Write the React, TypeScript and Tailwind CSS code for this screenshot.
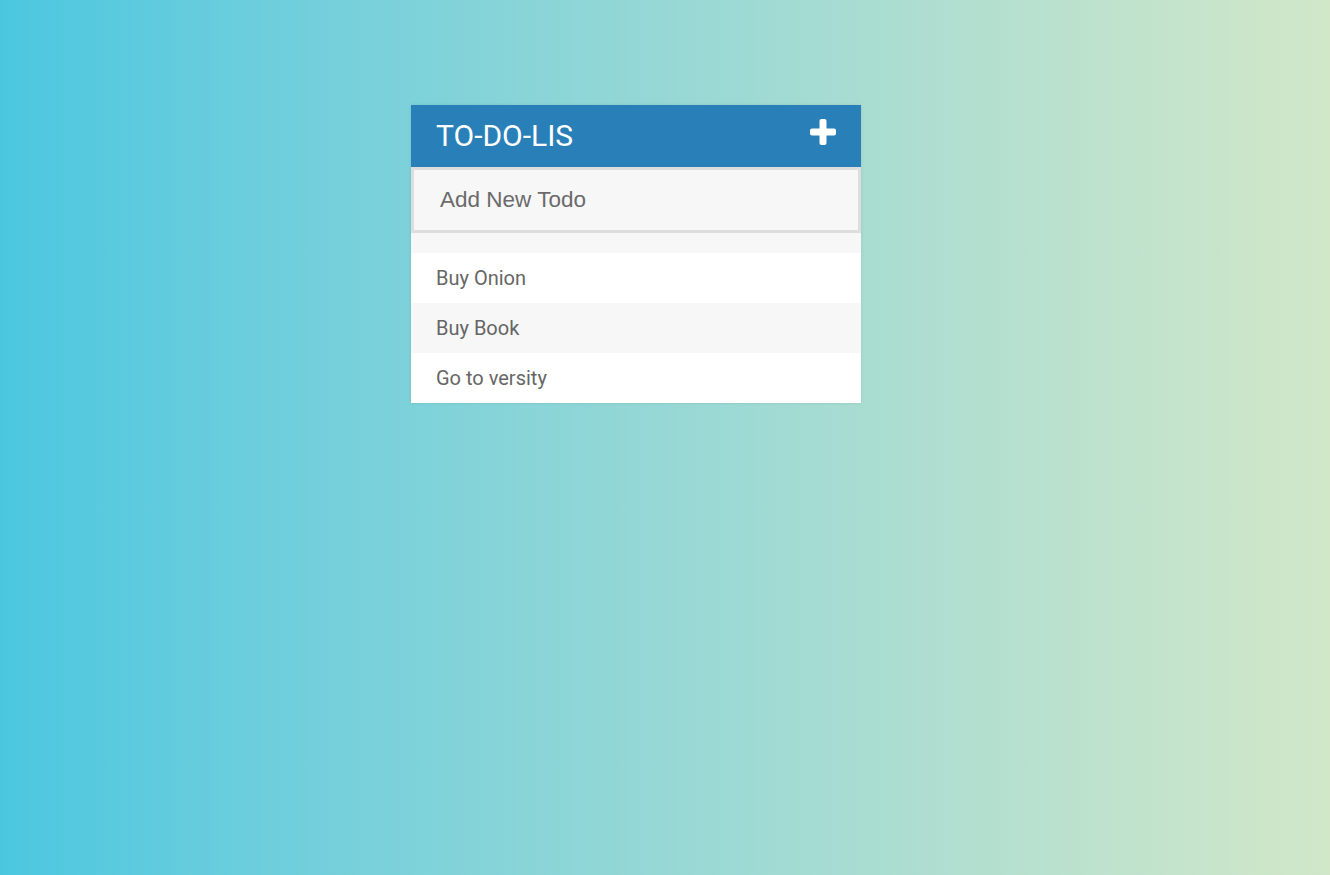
function PlusIcon() {
  return (
    <svg width="28" height="28" viewBox="0 0 28 28" className="block -translate-y-[4px]">
      <rect x="10.5" y="1" width="7" height="26" rx="2" fill="white" />
      <rect x="1" y="10.5" width="26" height="7" rx="2" fill="white" />
    </svg>
  );
}

function App() {
  const todos = ["Buy Onion", "Buy Book", "Go to versity"];

  return (
    <div className="min-h-screen w-full bg-gradient-to-r from-[#4ac7e0] to-[#d1e7c8] pt-[105px]">
      <div className="mx-auto w-[450px] translate-x-[-29px] bg-white shadow-[0_0_3px_rgba(0,0,0,0.1)]">
        {/* header */}
        <div className="flex h-[62px] items-center justify-between bg-[#2980b9] pl-[25px] pr-[24px]">
          <h1 className="font-['Roboto',sans-serif] text-[30px] font-normal leading-none text-white">TO-DO-LIS</h1>
          <PlusIcon />
        </div>

        {/* input */}
        <input
          type="text"
          placeholder="Add New Todo"
          className="block h-[66px] w-full border-[3px] border-[#dddddd] bg-[#f7f7f7] pl-[26px] font-['Liberation_Sans',Arial,sans-serif] text-[22.5px] text-[#666] outline-none placeholder:text-[#6b6b6b]"
        />
        <div className="h-[20px] bg-[#f7f7f7]" />

        {/* list */}
        <ul>
          {todos.map((t, i) => (
            <li
              key={t}
              className={
                "flex h-[50px] items-center pl-[25px] font-['Roboto',sans-serif] text-[20px] text-[#666] " +
                (i % 2 === 1 ? "bg-[#f7f7f7]" : "bg-white")
              }
            >
              {t}
            </li>
          ))}
        </ul>
      </div>
    </div>
  );
}

export default App;
